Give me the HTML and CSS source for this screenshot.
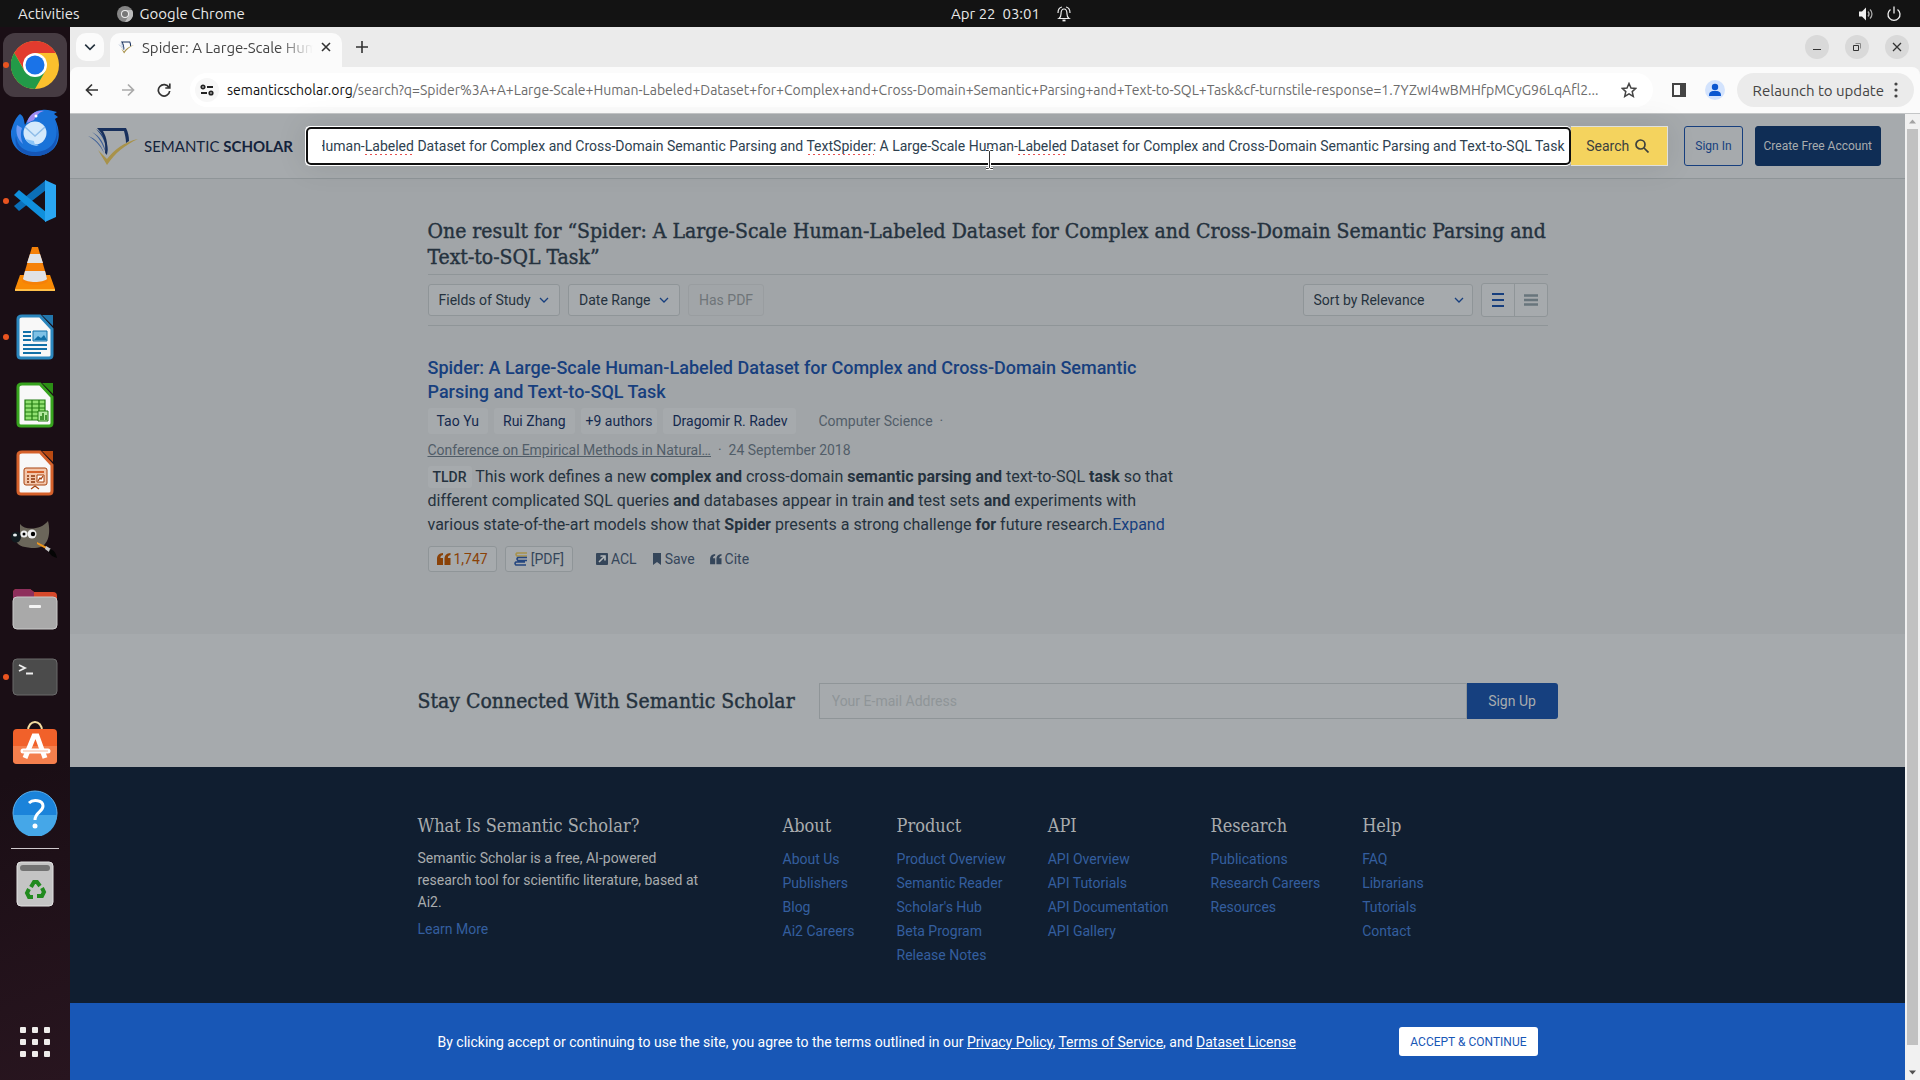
FILE: index.html
```html
<!DOCTYPE html>
<html lang="en">
<head>
  <meta charset="UTF-8">
  <meta name="viewport" content="width=device-width, initial-scale=1.0">
  <title>Spider: A Large-Scale Human-Labeled Dataset | Semantic Scholar</title>
  <link rel="stylesheet" href="styles.css">
</head>
<body>
  <!-- Shared shapes -->
  <svg class="defs" width="0" height="0">
    <symbol id="chevron" viewBox="0 0 10 10"><path d="M1 3l4 4 4-4" fill="none" stroke="currentColor" stroke-width="1.3"/></symbol>
    <symbol id="quote" viewBox="0 0 14 13"><path d="M6 0v2C4 2.300 3.400 3.500 3.400 5H6v7H0V5.500C0 2.500 2 .2 6 0zM13.500 0v2c-2 .3-2.600 1.500-2.600 3h2.600v7h-6V5.500c0-3 2-5.300 6-5.500z" fill="currentColor"/></symbol>
    <symbol id="s2" viewBox="0 0 50 37">
      <path d="M0 8c7 2 13 8 16 17C12 17 7 12 0 8z" fill="#3d5f98"/>
      <path d="M4 4c8 4 12 11 14 21C14 15 11 9 4 4z" fill="#3d5f98"/>
      <path d="M8 1c9 6 12 14 12 25-2-10-5-18-12-25z" fill="#24467f"/>
      <path d="M9 0h29c2 4 3 8 3 13l-3 2c0-4-1-8-2-12H15c4 7 5 14 4 24l-2-2C18 14 16 7 9 0z" fill="#18305c"/>
      <path d="M10 22l9 9C26 22 36 14 50 11 37 17 27 25 19 37z" fill="#a8924a"/>
    </symbol>
  </svg>

  <header class="topbar">
    <div class="topbar-left">
      <button class="activities">Activities</button>
      <span class="current-app">
        <svg width="16" height="16" viewBox="0 0 16 16"><circle cx="8" cy="8" r="8" fill="#858585"/><path d="M8 4h7A8 8 0 0 1 8 16l3.500-6z" fill="#bbb"/><circle cx="8" cy="8" r="4" fill="#eee"/><circle cx="8" cy="8" r="3" fill="#777"/></svg>
        Google Chrome
      </span>
    </div>
    <div class="clock">
      <span>Apr 22&nbsp; 03:01</span>
      <svg width="14" height="16" viewBox="0 0 14 16" fill="none" stroke="#eee" stroke-width="1.200"><path d="M2 12.500c1.500-1 2-2 2-4.500 0-3 1-5 3-5s3 2 3 5c0 2.500.5 3.500 2 4.500zM1 7c0-3 1.500-5.500 4-6M13 7c0-3-1.500-5.500-4-6"/><path d="M5.500 14.500h3" stroke-width="1.800"/></svg>
    </div>
    <div class="topbar-right">
      <svg width="16" height="16" viewBox="0 0 16 16"><path d="M1 5.500h3L8 1.500v13l-4-4H1z" fill="#eee"/><path d="M10 5.500c1.300 1.500 1.300 3.500 0 5M12 3.500c2.600 2.500 2.600 6.500 0 9" fill="none" stroke="#aaa" stroke-width="1.300"/></svg>
      <svg width="16" height="16" viewBox="0 0 16 16" fill="none" stroke="#eee" stroke-width="1.300"><path d="M4.500 3.500a6 6 0 1 0 7 0M8 .5v7"/></svg>
    </div>
  </header>

  <div class="desktop">
    <nav class="dock">
      <button class="dock-item active running" aria-label="Chrome">
        <svg width="48" height="48" viewBox="0 0 48 48"><circle cx="24" cy="24" r="24" fill="#fbc02d"/><path d="M3.200 12A24 24 0 0 1 44.800 12H24L14 30z" fill="#e23b2e"/><path d="M3.200 12A24 24 0 0 0 24 48l10.400-18L13.600 30z" fill="#229a48"/><circle cx="24" cy="24" r="12" fill="#fff"/><circle cx="24" cy="24" r="9.500" fill="#1a73e8"/></svg>
      </button>
      <button class="dock-item" aria-label="Thunderbird">
        <svg width="48" height="48" viewBox="0 0 48 48"><path d="M0 22C2 15 5 8 9 5c4 2 4 7 5 11C18 7 24 1 31 1c5-1 10 1 15 2l-3 2 4 3-3 2c8 17 4 35-19 37C9 47-1 37 0 22z" fill="#1a73d9"/><path d="M16 14C18 5 25 1 33 2c-5 1-8 5-10 9z" fill="#9d8cf0"/><path d="M44 12c5 16-1 30-19 31C13 43 6 37 5 27c-3 12 7 20 19 20 20 0 27-17 20-35z" fill="#1557b8"/><path d="M6 16c-2 8 1 15 6 19-2-5-3-10-1-16z" fill="#6e9cf5"/><circle cx="24" cy="24" r="11.500" fill="#d4e9fb"/><path d="M14 18l10 9 10-9" fill="none" stroke="#8fbde8" stroke-width="1.500"/><path d="M14 30c4 6 9 7 14 7-4-1-5-3-5-5z" fill="#8cc5f7"/><circle cx="25" cy="7" r="1.500" fill="#fff"/></svg>
      </button>
      <button class="dock-item running" aria-label="VS Code">
        <svg width="44" height="44" viewBox="0 0 44 44"><path d="M1 27l5 5L33 11V1z" fill="#0b6fb8"/><path d="M1 16l5-5 27 22v10z" fill="#1090dd"/><path d="M32 1l11 5v32l-11 5z" fill="#2aa6f2"/></svg>
      </button>
      <button class="dock-item" aria-label="VLC">
        <svg width="42" height="46" viewBox="0 0 42 46"><path d="M6 29h30l5 14v2H1v-2z" fill="#f88a05"/><path d="M18 1h6l10 34c-3 5-23 5-26 0z" fill="#f58109"/><path d="M16 8h10l3 9H13zM11 25h20l2 8c-4 4-20 4-24 0z" fill="#e0e2e5"/><path d="M1 43h40v2H1z" fill="#ffc04a"/></svg>
      </button>
      <button class="dock-item running" aria-label="Writer">
        <svg width="38" height="46" viewBox="0 0 38 46"><path d="M6 2h18l12 13v26q0 3-3 3H5q-3 0-3-3V5q0-3 4-3z" fill="#f8f8f8" stroke="#2b86bd" stroke-width="3"/><path d="M26 1h11v11z" fill="#2277ad"/><path d="M7 18h8M7 22h8M7 26h8M7 31h24M7 35h24M7 39h18" stroke="#1270a8" stroke-width="2"/><path d="M17 17h14v10H17z" fill="#7fc1e6" stroke="#1270a8"/><path d="M18 26l4-4 3 2 3-3 3 5z" fill="#1270a8"/></svg>
      </button>
      <button class="dock-item" aria-label="Calc">
        <svg width="38" height="46" viewBox="0 0 38 46"><path d="M6 2h18l12 13v26q0 3-3 3H5q-3 0-3-3V5q0-3 4-3z" fill="#f8f8f8" stroke="#37a31e" stroke-width="3"/><path d="M26 1h11v11z" fill="#2b8f15"/><path d="M9 18h20v20H9zM9 22h20M9 26h20M9 30h20M9 34h20M16 18v20M23 18v20" fill="#90e070" stroke="#217a10" stroke-width="1.200"/><path d="M22 29h10v10H22z" fill="#b4e8a0" stroke="#217a10"/><path d="M25 38v-4M27 38v-7M30 38v-5" stroke="#217a10" stroke-width="1.500"/></svg>
      </button>
      <button class="dock-item" aria-label="Impress">
        <svg width="38" height="46" viewBox="0 0 38 46"><path d="M6 2h18l12 13v26q0 3-3 3H5q-3 0-3-3V5q0-3 4-3z" fill="#f8f8f8" stroke="#d5612b" stroke-width="3"/><path d="M26 1h11v11z" fill="#b94a12"/><rect x="8" y="18" width="23" height="17" rx="2" fill="#f3c7ac" stroke="#a8430f"/><path d="M11 22h17" stroke="#d5612b" stroke-width="2"/><path d="M11 26h2M11 29h2M11 32h2M15 26h4M15 29h4M15 32h4" stroke="#8a3408" stroke-width="1.500"/><path d="M21 25h7v7h-7z" fill="#fff" stroke="#a8430f"/><path d="M22 31l2-3 1 1 2-3M15 39l4-3 4 3" fill="none" stroke="#a8430f" stroke-width="1.300"/></svg>
      </button>
      <button class="dock-item" aria-label="GIMP">
        <svg width="48" height="40" viewBox="0 0 48 40"><path d="M9 3c5 7 21 6 28-3 3 12 1 27-13 27C14 27 7 25 5 20l4-6z" fill="#6b665a"/><ellipse cx="5" cy="16" rx="5" ry="5.500" fill="#111a1f"/><ellipse cx="4" cy="14" rx="2" ry="1.500" fill="#e8eef0"/><circle cx="13" cy="13" r="3.500" fill="#eee"/><circle cx="21" cy="13" r="4.500" fill="#eee"/><circle cx="13" cy="13" r="1.500"/><circle cx="22" cy="13" r="2.200"/><path d="M26 21l10 5-1 2-9-5z" fill="#ee961c"/><path d="M35 25l5 3-2 3-4-3z" fill="#ccc"/><path d="M39 28c4 1 6 4 7 9-4-1-7-3-8-6z" fill="#050505"/></svg>
      </button>
      <button class="dock-item" aria-label="Files">
        <svg width="46" height="42" viewBox="0 0 46 42"><path d="M1 5q0-4 4-4h13l4 3h19q4 0 4 4v10H1z" fill="#d6492b"/><path d="M1 5q0-4 4-4h13l4 3v14H1z" fill="#8e2f5c"/><rect x="1" y="9" width="44" height="32" rx="4" fill="#a9a9a9" stroke="#c9c9c9"/><rect x="17" y="17" width="12" height="3" rx="1" fill="#f4f4f4"/></svg>
      </button>
      <button class="dock-item running" aria-label="Terminal">
        <svg width="46" height="38" viewBox="0 0 46 38"><rect x="1" y="1" width="44" height="36" rx="4" fill="#4b4b4b" stroke="#6b6b6b"/><path d="M7 7l6 3-6 3M14 15.500h7" fill="none" stroke="#eee" stroke-width="1.800"/></svg>
      </button>
      <button class="dock-item" aria-label="Software">
        <svg width="46" height="48" viewBox="0 0 46 48"><path d="M16 10c0-12 14-12 14 0" fill="none" stroke="#f4dca0" stroke-width="2"/><rect x="1" y="8" width="44" height="35" rx="4" fill="#f1612a"/><path d="M1 25h44v14q0 4-4 4H5q-4 0-4-4z" fill="#f47f4d"/><path d="M13 37l9-22h3l8 22" fill="none" stroke="#fff" stroke-width="5"/><path d="M11 30h25" stroke="#fff" stroke-width="5" stroke-linecap="round"/><path d="M11 30h25" stroke="#f3b598"/></svg>
      </button>
      <button class="dock-item" aria-label="Help">
        <svg width="46" height="46" viewBox="0 0 46 46"><circle cx="23" cy="23" r="22" fill="#1b83da" stroke="#5db1ef"/><path d="M1 25a22 22 0 0 0 44 0z" fill="#45a7e8"/><path d="M17 13c4-4 14-3 14 3 0 6-8 6-8 14" fill="none" stroke="#fff" stroke-width="3"/><circle cx="23" cy="36" r="2.500" fill="#fff"/></svg>
      </button>
      <hr class="dock-line">
      <button class="dock-item" aria-label="Trash">
        <svg width="38" height="46" viewBox="0 0 38 46"><rect x="1" y="1" width="36" height="44" rx="4" fill="#c4c4c4" stroke="#e3e3e3"/><rect x="4" y="4" width="30" height="6" rx="3" fill="#737373"/><g fill="none" stroke="#218a1e" stroke-width="4"><path d="M15 26l3-5h3l3 4"/><path d="M26 27l2 4-2 4h-5"/><path d="M17 36h-4l-2-4 2-4"/></g></svg>
      </button>
      <button class="dock-item apps" aria-label="Show applications">
        <svg width="30" height="30" viewBox="0 0 30 30" fill="#efedeb"><rect width="6" height="6" rx="1"/><rect x="12" width="6" height="6" rx="1"/><rect x="24" width="6" height="6" rx="1"/><rect y="12" width="6" height="6" rx="1"/><rect x="12" y="12" width="6" height="6" rx="1"/><rect x="24" y="12" width="6" height="6" rx="1"/><rect y="24" width="6" height="6" rx="1"/><rect x="12" y="24" width="6" height="6" rx="1"/><rect x="24" y="24" width="6" height="6" rx="1"/></svg>
      </button>
    </nav>

    <div class="browser">
      <div class="tabstrip">
        <button class="tab-search" aria-label="Search tabs"><svg width="12" height="12"><use href="#chevron"/></svg></button>
        <div class="tab">
          <svg width="16" height="13"><use href="#s2"/></svg>
          <span class="tab-title">Spider: A Large-Scale Human-Labeled</span>
          <button class="tab-close" aria-label="Close tab"><svg width="10" height="10" viewBox="0 0 10 10"><path d="M1 1l8 8M9 1L1 9" stroke="#333" stroke-width="1.600"/></svg></button>
        </div>
        <button class="tab-new" aria-label="New tab"><svg width="12" height="12" viewBox="0 0 12 12"><path d="M6 0v12M0 6h12" stroke="#333" stroke-width="1.600"/></svg></button>
        <div class="window-controls">
          <button aria-label="Minimize"><svg width="10" height="10" viewBox="0 0 10 10"><path d="M1 7.500h8" stroke="#333"/></svg></button>
          <button aria-label="Restore"><svg width="10" height="10" viewBox="0 0 10 10" fill="none" stroke="#333"><path d="M1.500 3.500h5v5h-5z"/><path d="M3.500 1.500h5v5" stroke="#888"/></svg></button>
          <button aria-label="Close"><svg width="10" height="10" viewBox="0 0 10 10"><path d="M1 1l8 8M9 1L1 9" stroke="#333" stroke-width="1.300"/></svg></button>
        </div>
      </div>

      <div class="toolbar">
        <button class="nav-btn" aria-label="Back"><svg width="14" height="14" viewBox="0 0 14 14" fill="none" stroke="#333" stroke-width="1.700"><path d="M13 7H2M7 1.500L1.500 7 7 12.500"/></svg></button>
        <button class="nav-btn" aria-label="Forward"><svg width="14" height="14" viewBox="0 0 14 14" fill="none" stroke="#aaa" stroke-width="1.700"><path d="M1 7h11M7 1.500L12.500 7 7 12.500"/></svg></button>
        <button class="nav-btn" aria-label="Reload"><svg width="14" height="14" viewBox="0 0 14 14" fill="none" stroke="#333" stroke-width="1.700"><path d="M12 4.500A5.700 5.700 0 1 0 12.700 8M12.800.5V5H8.300"/></svg></button>
        <div class="omnibox">
          <button class="site-info" aria-label="Site information"><svg width="14" height="12" viewBox="0 0 14 12" fill="none" stroke="#222" stroke-width="1.800"><circle cx="3" cy="3" r="1.700"/><path d="M7 3h6M1 9h6"/><circle cx="11" cy="9" r="1.700"/></svg></button>
          <div class="url"><span>semanticscholar.org</span>/search?q=Spider%3A+A+Large-Scale+Human-Labeled+Dataset+for+Complex+and+Cross-Domain+Semantic+Parsing+and+Text-to-SQL+Task&amp;cf-turnstile-response=1.7YZwI4wBMHfpMCyG96LqAfl2...</div>
          <button class="bookmark" aria-label="Bookmark"><svg width="16" height="16" viewBox="0 0 16 16" fill="none" stroke="#444" stroke-width="1.500"><path d="M8 1.500l2 4.500 4.800.4-3.600 3.200 1.100 4.800L8 11.900l-4.300 2.500 1.100-4.800L1.200 6.400 6 6z"/></svg></button>
        </div>
        <button class="side-panel" aria-label="Side panel"><svg width="14" height="14" viewBox="0 0 14 14"><rect x="1" y="1" width="12" height="12" fill="none" stroke="#444" stroke-width="2"/><path d="M8 1h5v12H8z" fill="#444"/></svg></button>
        <button class="profile" aria-label="Profile"><svg width="20" height="20" viewBox="0 0 20 20"><circle cx="10" cy="10" r="10" fill="#d3e3fd"/><circle cx="10" cy="7" r="3.200" fill="#0b57d0"/><path d="M4 16c0-5 3-5 6-5s6 0 6 5z" fill="#0b57d0"/></svg></button>
        <button class="relaunch">Relaunch to update <svg width="4" height="16" viewBox="0 0 4 16" fill="#444"><circle cx="2" cy="2" r="1.600"/><circle cx="2" cy="8" r="1.600"/><circle cx="2" cy="14" r="1.600"/></svg></button>
      </div>

      <div class="viewport">
        <div class="page">
          <header class="site-header">
            <a class="logo" href="#"><svg width="50" height="37"><use href="#s2"/></svg><span>SEMANTIC <b>SCHOLAR</b></span></a>
            <form class="search-form">
              <div class="search-box">
                <input class="search-input" type="text" aria-label="Search papers" spellcheck="false" value="Spider: A Large-Scale Human-Labeled Dataset for Complex and Cross-Domain Semantic Parsing and TextSpider: A Large-Scale Human-Labeled Dataset for Complex and Cross-Domain Semantic Parsing and Text-to-SQL Task">
                <!-- spelling marks under the query words -->
                <i class="typo typo-first"></i>
                <i class="typo typo-wide"></i>
                <i class="typo typo-last"></i>
                <svg class="cursor" width="9" height="21" viewBox="0 0 9 21"><path d="M1 1.500h2.500l1 1 1-1H8M1 19.500h2.500l1-1 1 1H8M4.500 2.500v16" fill="none" stroke="#fff" stroke-width="3"/><path d="M1 1.500h2.500l1 1 1-1H8M1 19.500h2.500l1-1 1 1H8M4.500 2.500v16" fill="none" stroke="#333"/></svg>
              </div>
              <button class="search-btn" type="button">Search <svg width="14" height="14" viewBox="0 0 14 14" fill="none" stroke="currentColor" stroke-width="1.700"><circle cx="5.500" cy="5.500" r="4.500"/><path d="M9 9l4.500 4.500"/></svg></button>
            </form>
            <a class="sign-in" href="#">Sign In</a>
            <a class="create-account" href="#">Create Free Account</a>
          </header>

          <main class="results">
            <h1>One result for “Spider: A Large-Scale Human-Labeled Dataset for Complex and Cross-Domain Semantic Parsing and Text-to-SQL Task”</h1>
            <div class="filters">
              <button class="filter">Fields of Study <svg width="10" height="10"><use href="#chevron"/></svg></button>
              <button class="filter">Date Range <svg width="10" height="10"><use href="#chevron"/></svg></button>
              <button class="filter" disabled>Has PDF</button>
              <div class="sort">
                <select aria-label="Sort order"><option>Sort by Relevance</option></select>
                <svg width="10" height="10"><use href="#chevron"/></svg>
              </div>
              <div class="view-toggle">
                <button class="selected" aria-label="Detail view"><svg width="12" height="14" viewBox="0 0 12 14"><path d="M0 1h12M0 7h12M0 13h12" stroke="currentColor" stroke-width="2"/></svg></button>
                <button aria-label="List view"><svg width="14" height="12" viewBox="0 0 14 12"><path d="M0 1.500h14M0 6h14M0 10.500h14" stroke="currentColor" stroke-width="2.600"/></svg></button>
              </div>
            </div>

            <article class="paper">
              <h2><a href="#">Spider: A Large-Scale Human-Labeled Dataset for Complex and Cross-Domain Semantic Parsing and Text-to-SQL Task</a></h2>
              <div class="authors">
                <a class="author" href="#">Tao Yu</a>
                <a class="author" href="#">Rui Zhang</a>
                <button class="author more">+9 authors</button>
                <a class="author" href="#">Dragomir R. Radev</a>
                <span class="field">Computer Science &nbsp;·</span>
              </div>
              <div class="venue"><a href="#">Conference on Empirical Methods in Natural…</a> &nbsp;·&nbsp; 24 September 2018</div>
              <p class="abstract"><span class="tldr">TLDR</span> This work defines a new <b>complex and</b> cross-domain <b>semantic parsing and</b> text-to-SQL <b>task</b> so that different complicated SQL queries <b>and</b> databases appear in train <b>and</b> test sets <b>and</b> experiments with various state-of-the-art models show that <b>Spider</b> presents a strong challenge <b>for</b> future research.<button class="expand">Expand</button></p>
              <div class="actions">
                <a class="pill cited" href="#"><svg width="14" height="13"><use href="#quote"/></svg>1,747</a>
                <a class="pill" href="#"><svg width="14" height="14" viewBox="0 0 14 14" fill="none" stroke-width="1.600"><path d="M13 1H3q-2 1.500 0 3h10" stroke="#a8924a"/><path d="M13 5.500H4q-2 1.500 0 3h9M11 10H2q-2 1.500 0 3h10" stroke="#24467f"/></svg>[PDF]</a>
                <a class="action first" href="#"><svg width="12" height="12" viewBox="0 0 12 12"><rect width="12" height="12" rx="1" fill="#35465a"/><path d="M3 9l5-5M4.500 3H9v4.500" fill="none" stroke="#b5b9bb" stroke-width="1.600"/></svg>ACL</a>
                <button class="action"><svg width="10" height="12" viewBox="0 0 10 12"><path d="M1 0h8v12L5 9l-4 3z" fill="#35465a"/></svg>Save</button>
                <button class="action"><svg width="12" height="11"><use href="#quote"/></svg>Cite</button>
              </div>
            </article>
          </main>

          <section class="newsletter">
            <form class="container">
              <h2><label for="email">Stay Connected With Semantic Scholar</label></h2>
              <input id="email" type="email" placeholder="Your E-mail Address">
              <button type="button">Sign Up</button>
            </form>
          </section>

          <footer class="site-footer">
            <div class="container">
              <div class="about">
                <h3>What Is Semantic Scholar?</h3>
                <p>Semantic Scholar is a free, AI-powered research tool for scientific literature, based at Ai2.</p>
                <a href="#">Learn More</a>
              </div>
              <div class="links"><h3>About</h3><a href="#">About Us</a><a href="#">Publishers</a><a href="#">Blog</a><a href="#">Ai2 Careers</a></div>
              <div class="links"><h3>Product</h3><a href="#">Product Overview</a><a href="#">Semantic Reader</a><a href="#">Scholar's Hub</a><a href="#">Beta Program</a><a href="#">Release Notes</a></div>
              <div class="links"><h3>API</h3><a href="#">API Overview</a><a href="#">API Tutorials</a><a href="#">API Documentation</a><a href="#">API Gallery</a></div>
              <div class="links"><h3>Research</h3><a href="#">Publications</a><a href="#">Research Careers</a><a href="#">Resources</a></div>
              <div class="links"><h3>Help</h3><a href="#">FAQ</a><a href="#">Librarians</a><a href="#">Tutorials</a><a href="#">Contact</a></div>
            </div>
          </footer>

          <div class="cookie-bar">
            <div class="cookie-inner">
              <p>By clicking accept or continuing to use the site, you agree to the terms outlined in our <a href="#">Privacy Policy</a>, <a href="#">Terms of Service</a>, and <a href="#">Dataset License</a></p>
              <button>ACCEPT &amp; CONTINUE</button>
            </div>
          </div>
        </div>
        <div class="scrollbar">
          <svg width="15" height="15" viewBox="0 0 15 15"><path d="M4 9.500h7L7.500 5.500z" fill="#a3a3a3"/></svg>
          <div class="thumb"></div>
          <svg width="15" height="15" viewBox="0 0 15 15"><path d="M4 5.500h7L7.500 9.500z" fill="#505050"/></svg>
        </div>
      </div>
    </div>
  </div>

  <script>
// Keep the end of the query in view
const searchInput = document.querySelector('.search-input');
searchInput.scrollLeft = searchInput.scrollWidth;
  </script>
</body>
</html>
```

FILE: styles.css
```css
* {
  box-sizing: border-box;
}

body {
  margin: 0;
  height: 100vh;
  display: flex;
  flex-direction: column;
  overflow: hidden;
  background-color: #1c0f17;
  font-family: Roboto, sans-serif;
  font-size: 14px;
  color: #25323e;
}

button,
input,
select {
  font: inherit;
  color: inherit;
  margin: 0;
  padding: 0;
  border: none;
  background: none;
}

a {
  color: inherit;
  text-decoration: none;
}

svg {
  flex: none;
}

h1,
h2,
h3,
p {
  margin: 0;
}

.defs {
  position: absolute;
}

/* Desktop top bar */
.topbar {
  height: 27px;
  flex: none;
  display: grid;
  grid-template-columns: 1fr auto 1fr;
  align-items: center;
  padding: 0 18px;
  background-color: #131313;
  color: #e8e8e8;
  font-family: Ubuntu, "Open Sans", sans-serif;
  font-size: 15px;
}

.topbar-left,
.topbar-right,
.clock,
.current-app {
  display: flex;
  align-items: center;
}

.topbar-left {
  gap: 37px;
}

.current-app {
  gap: 7px;
}

.clock {
  gap: 17px;
  padding-left: 102px;
}

.topbar-right {
  justify-content: flex-end;
  gap: 12px;
}

.desktop {
  flex: 1;
  min-height: 0;
  display: flex;
}

/* Dock */
.dock {
  width: 70px;
  flex: none;
  display: flex;
  flex-direction: column;
  align-items: center;
  gap: 4px;
  padding: 6px 0;
  background-image: linear-gradient(160deg, #1a0e15 70%, #28151f);
}

.dock-item {
  position: relative;
  width: 64px;
  height: 64px;
  flex: none;
  display: flex;
  align-items: center;
  justify-content: center;
  border-radius: 12px;
}

.dock-item.active {
  background-color: #463b42;
}

.dock-item.running::before {
  content: "";
  position: absolute;
  left: 0;
  width: 6px;
  height: 6px;
  border-radius: 50%;
  background-color: #e95420;
}

.dock-line {
  width: 48px;
  height: 1px;
  margin: -1px 0;
  border: none;
  background-color: #cfc9cd;
}

.dock-item.apps {
  margin-top: auto;
}

/* Browser */
.browser {
  flex: 1;
  min-width: 0;
  display: flex;
  flex-direction: column;
  background-color: #ebebeb;
  font-family: Ubuntu, "Open Sans", sans-serif;
}

.tabstrip {
  height: 40px;
  flex: none;
  display: flex;
  align-items: center;
  padding: 0 11px 0 6px;
}

.tab-search {
  width: 28px;
  height: 28px;
  border-radius: 10px;
  background-color: #fbfbfb;
}

.tab {
  width: 232px;
  height: 34px;
  align-self: flex-end;
  display: flex;
  align-items: center;
  gap: 8px;
  margin-left: 6px;
  padding: 0 11px 6px 8px;
  border-radius: 10px 10px 0 0;
  background-color: #fbfbfb;
}

.tab-title {
  flex: 1;
  overflow: hidden;
  white-space: nowrap;
  font-size: 15px;
  color: #444;
  mask-image: linear-gradient(to right, #000 80%, transparent);
}

.tab-new {
  width: 28px;
  height: 28px;
  margin-left: 6px;
}

.tab-close,
.tab-search,
.tab-new,
.window-controls button {
  display: flex;
  align-items: center;
  justify-content: center;
}

.window-controls {
  display: flex;
  gap: 16px;
  margin-left: auto;
}

.window-controls button {
  width: 24px;
  height: 24px;
  border-radius: 50%;
  background-color: #d9d9d9;
}

.toolbar {
  height: 47px;
  flex: none;
  display: flex;
  align-items: center;
  padding: 0 6px;
  border-radius: 8px 8px 0 0;
  border-bottom: 1px solid #c4c6c7;
  background-color: #fbfbfb;
}

.nav-btn {
  width: 32px;
  height: 32px;
  flex: none;
  display: flex;
  align-items: center;
  justify-content: center;
  margin-right: 4px;
}

.omnibox {
  flex: 1;
  min-width: 0;
  height: 34px;
  display: flex;
  align-items: center;
  gap: 8px;
  margin-left: 6px;
  padding: 0 16px 0 5px;
  border-radius: 17px;
  background-color: #fff;
}

.site-info {
  width: 24px;
  height: 24px;
  flex: none;
  display: flex;
  align-items: center;
  justify-content: center;
  border-radius: 50%;
  background-color: #f7f7f7;
}

.url {
  flex: 1;
  overflow: hidden;
  white-space: nowrap;
  font-size: 14px;
  color: #6c6c6c;
}

.url span {
  color: #111;
}

.bookmark,
.side-panel,
.profile {
  display: flex;
}

.side-panel {
  margin-left: 19px;
}

.profile {
  margin-left: 19px;
}

.relaunch {
  height: 34px;
  flex: none;
  display: flex;
  align-items: center;
  gap: 10px;
  margin-left: 12px;
  padding: 0 16px;
  border-radius: 17px;
  background-color: #ebebeb;
  color: #444;
  font-size: 15px;
}

.viewport {
  flex: 1;
  min-height: 0;
  display: flex;
  font-family: Roboto, sans-serif;
}

.page {
  flex: 1;
  min-width: 0;
  display: flex;
  flex-direction: column;
  background-color: #a1a5a8;
}

.scrollbar {
  width: 15px;
  display: flex;
  flex-direction: column;
  background-color: #f1f1f1;
}

.thumb {
  flex: 1;
  margin: 0 2px 20px;
  background-color: #c1c1c1;
}

/* Site header */
.site-header {
  height: 65px;
  flex: none;
  display: flex;
  align-items: center;
  padding: 0 24px 0 18px;
  border-bottom: 1px solid #8f9598;
  background-color: #a6aaad;
}

.logo {
  display: flex;
  align-items: center;
  gap: 6px;
  font-family: Lato, sans-serif;
  font-size: 15px;
  color: #14233c;
}

.logo b {
  font-weight: 700;
}

.search-form {
  flex: 1;
  display: flex;
  height: 40px;
  margin: 0 16px 0 12px;
  box-shadow: 0 0 30px rgba(0, 0, 0, 0.1);
}

.search-box {
  flex: 1;
  position: relative;
  border: 1px solid #fff;
  border-right: none;
  border-radius: 5px;
  background-color: #fff;
}

.search-input {
  width: 100%;
  height: 100%;
  padding: 0 4px 0 14px;
  border: 2px solid #101010;
  border-radius: 5px;
  color: #2e414f;
}

.typo {
  position: absolute;
  top: 27px;
  width: 50px;
  height: 1px;
  background-image: repeating-linear-gradient(to right, #e8504f 0 2px, transparent 2px 5px);
}

.typo-first {
  right: 1156px;
}

.typo-wide {
  right: 697px;
  width: 66px;
}

.typo-last {
  right: 503px;
}

.cursor {
  position: absolute;
  top: 22px;
  right: 577px;
}

.search-btn {
  display: flex;
  align-items: center;
  gap: 6px;
  padding: 0 18px 0 15px;
  border: 1px solid #dfe0de;
  border-left: none;
  background-color: #f4d35e;
  color: #3b3f3e;
}

.sign-in,
.create-account {
  height: 40px;
  display: flex;
  align-items: center;
  padding: 0 10px;
  border: 1px solid #173f7e;
  border-radius: 3px;
  color: #173f7e;
  font-size: 12px;
}

.create-account {
  margin-left: 12px;
  padding: 0 8px;
  border-color: #0f2d55;
  background-color: #0f2d55;
  color: #a8acae;
}

/* Results */
.results {
  width: 100%;
  max-width: 1120px;
  margin: 0 auto;
  padding: 39px 0 62px;
}

h1,
h2,
h3 {
  font-family: "Roboto Slab", "DejaVu Serif Condensed", "DejaVu Serif", serif;
  font-weight: 500;
}

h1,
.newsletter h2 {
  -webkit-text-stroke: 0.4px currentColor;
}

h1 {
  padding-bottom: 4px;
  font-size: 21px;
  line-height: 26px;
}

.filters {
  display: flex;
  align-items: center;
  gap: 8px;
  height: 52px;
  border-top: 1px solid #8f9598;
  border-bottom: 1px solid #8f9598;
}

.filter,
.sort select {
  height: 32px;
  padding: 0 10px;
  border: 1px solid #8f9598;
  border-radius: 3px;
  background-color: #a6aaad;
}

.filter svg {
  margin-left: 5px;
}

.filter svg,
.sort svg {
  color: #173f7e;
}

.filter:disabled {
  border-color: #999da0;
  background: none;
  color: #6f7579;
}

.sort {
  position: relative;
  width: 170px;
  margin-left: auto;
}

.sort select {
  width: 100%;
  appearance: none;
}

.sort svg {
  position: absolute;
  right: 9px;
  top: 11px;
}

.view-toggle {
  display: flex;
  border: 1px solid #8f9598;
  border-radius: 3px;
  background-color: #a6aaad;
}

.view-toggle button {
  width: 32px;
  height: 32px;
  display: flex;
  align-items: center;
  justify-content: center;
  color: #68757c;
}

.view-toggle .selected {
  width: 33px;
  border-right: 1px solid #8f9598;
  color: #173f7e;
}

.paper {
  max-width: 750px;
  padding-top: 30px;
}

.paper h2 {
  font-family: Roboto, sans-serif;
  font-size: 18px;
  font-weight: 500;
  line-height: 24px;
  color: #173f7e;
}

.authors {
  display: flex;
  gap: 6px;
  margin-top: 4px;
  line-height: 26px;
}

.author {
  padding: 0 9px;
  border-radius: 3px;
  background-color: #a6aaad;
  color: #14294e;
}

.author.more {
  padding: 0 5px;
}

.field {
  margin-left: 16px;
  color: #515d68;
}

.venue {
  margin-top: 3px;
  line-height: 26px;
  color: #515d68;
}

.venue a {
  text-decoration: underline;
}

.abstract {
  margin-top: 2px;
  font-size: 16px;
  line-height: 24px;
}

.abstract b {
  font-weight: 700;
}

.tldr {
  padding: 3px 5px;
  border-radius: 3px;
  background-color: #a6aaad;
  font-size: 14px;
  font-weight: 500;
}

.expand {
  color: #173f7e;
}

.actions {
  display: flex;
  align-items: center;
  gap: 8px;
  margin-top: 9px;
  color: #35465a;
}

.pill,
.action {
  height: 26px;
  display: flex;
  align-items: center;
  gap: 3px;
}

.pill {
  padding: 0 8px;
  border: 1px solid #8f9598;
  border-radius: 3px;
  background-color: #a6aaad;
}

.cited {
  color: #8a4208;
}

.action {
  margin-right: 7px;
}

.action.first {
  margin-left: 15px;
}

/* Newsletter */
.container {
  width: 100%;
  max-width: 1140px;
  margin: 0 auto;
  display: flex;
}

.newsletter {
  padding: 49px 0 48px;
  background-color: #a6aaad;
}

.newsletter .container {
  align-items: center;
}

.newsletter h2 {
  margin-right: 24px;
  font-size: 21px;
}

.newsletter input {
  flex: 1;
  height: 36px;
  padding: 0 12px;
  border: 1px solid #8f9598;
}

.newsletter input::placeholder {
  color: #8f9598;
}

.newsletter button {
  width: 91px;
  height: 36px;
  border-radius: 0 3px 3px 0;
  background-color: #16407f;
  color: #a8acae;
}

/* Footer */
.site-footer {
  flex: 1;
  min-height: 0;
  padding-top: 47px;
  background-color: #101e30;
  color: #a9acae;
}

.site-footer .container {
  gap: 42px;
}

.site-footer h3 {
  margin-bottom: 9px;
  font-size: 18px;
  font-weight: 400;
  line-height: 24px;
}

.site-footer a {
  display: block;
  line-height: 24px;
  color: #345e9f;
}

.about {
  width: 323px;
}

.about p {
  max-width: 290px;
  margin-bottom: 4px;
  line-height: 22px;
}

/* Cookie bar */
.cookie-bar {
  height: 77px;
  flex: none;
  display: flex;
  background-color: #1857b6;
  color: #fff;
}

.cookie-inner {
  width: 100%;
  max-width: 1100px;
  margin: 0 auto;
  display: flex;
  align-items: center;
  justify-content: space-between;
}

.cookie-inner a {
  text-decoration: underline;
}

.cookie-inner button {
  height: 29px;
  padding: 0 11px;
  border-radius: 3px;
  background-color: #fff;
  color: #1857b6;
  font-size: 12px;
}
```
